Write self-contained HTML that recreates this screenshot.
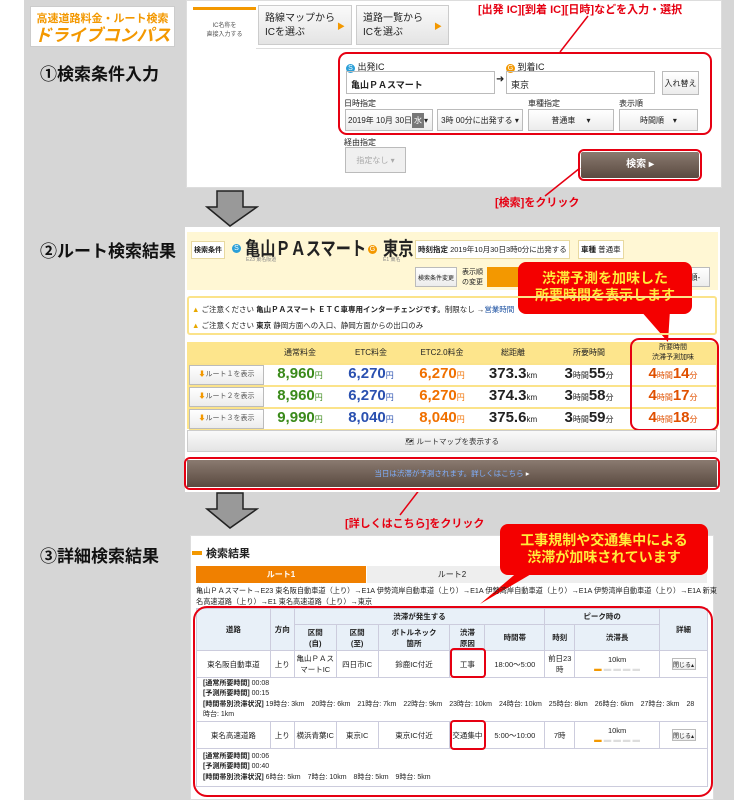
<!DOCTYPE html>
<html><head><meta charset="utf-8"><style>
*{margin:0;padding:0;box-sizing:border-box}
body{width:752px;height:800px;position:relative;background:#fff;font-family:"Liberation Sans","Noto Sans CJK JP",sans-serif;overflow:hidden;color:#222}
.a{position:absolute}
.t{font-size:9px;white-space:nowrap}
.gb{background:linear-gradient(#fafafa,#e4e4e4);border:1px solid #ccc}
.rb{border:2px solid #e60012;border-radius:9px}
.red{color:#e60012;font-weight:bold}
.h{font-size:17px;font-weight:bold;color:#111}
.sel{background:linear-gradient(#fff,#ececec);border:1px solid #bbb;font-size:8px;display:flex;align-items:center;justify-content:center}
table{border-collapse:collapse}
.rt td{border-bottom:2px solid #fbe38a;height:22px;font-weight:bold;text-align:center;font-size:15px;padding:0;line-height:18px}
.rt td.hd{font-size:8px;font-weight:normal;line-height:10px}
.dt td,.dt th{border:1px solid #ccd;font-size:7.5px;text-align:center;font-weight:normal}
.dt th{background:#e8f0f8;font-weight:bold}
.arrow{position:absolute;width:54px;height:37px}
.call{position:absolute;background:#f40000;border-radius:8px;color:#ffeb3b;font-weight:bold;text-align:center;font-size:14px;line-height:17px}
.n{font-size:8px;font-weight:normal}
.sq{display:inline-block;transform:scaleX(0.8);transform-origin:left top;white-space:nowrap}
</style></head><body>
<div class="a" style="left:24px;top:0;width:710px;height:800px;background:#d6d6d6"></div>
<!-- logo -->
<div class="a" style="left:30px;top:6px;width:145px;height:41px;background:#fff;border:1px solid #ccc;color:#f39800;font-weight:bold;text-align:center;white-space:nowrap">
<div style="font-size:11px;margin-top:3px">高速道路料金・ルート検索</div>
<div style="font-size:17px;font-style:italic;line-height:20px">ドライブコンパス</div></div>
<div class="a h" style="left:40px;top:60px">①検索条件入力</div>
<div class="a h" style="left:40px;top:237px">②ルート検索結果</div>
<div class="a h" style="left:40px;top:542px">③詳細検索結果</div>

<!-- panel1 -->
<div class="a" style="left:186px;top:0;width:536px;height:188px;background:#fff;border:1px solid #ddd"></div>
<div class="a" style="left:193px;top:7px;width:63px;height:42px;border-top:3px solid #f39800;font-size:6px;text-align:center;padding-top:10px;color:#555">IC名称を<br>直接入力する</div>
<div class="a" style="left:256px;top:48px;width:466px;height:1px;background:#ddd"></div>
<div class="a gb" style="left:258px;top:5px;width:94px;height:40px;font-size:10px;padding:6px 6px;line-height:14px">路線マップから<br>ICを選ぶ<span style="position:absolute;right:6px;top:14px;color:#f39800;font-size:8px">▶</span></div>
<div class="a gb" style="left:356px;top:5px;width:93px;height:40px;font-size:10px;padding:6px 6px;line-height:14px">道路一覧から<br>ICを選ぶ<span style="position:absolute;right:6px;top:14px;color:#f39800;font-size:8px">▶</span></div>
<div class="a red" style="left:478px;top:1px;font-size:11px">[出発 IC][到着 IC][日時]などを入力・選択</div>
<svg class="a" style="left:0;top:0" width="752" height="800"><g stroke="#e60012" stroke-width="1.5" fill="none"><line x1="588" y1="16" x2="560" y2="52"/><line x1="580" y1="168" x2="545" y2="196"/><line x1="420" y1="489" x2="400" y2="515"/></g></svg>
<div class="a t" style="left:346px;top:60px"><span style="display:inline-block;width:9px;height:9px;border-radius:50%;background:#2a9fd8;color:#fff;font-size:7px;text-align:center;line-height:9px">S</span> 出発IC</div>
<div class="a t" style="left:506px;top:60px"><span style="display:inline-block;width:9px;height:9px;border-radius:50%;background:#f39800;color:#fff;font-size:7px;text-align:center;line-height:9px">G</span> 到着IC</div>
<div class="a" style="left:346px;top:71px;width:149px;height:23px;border:1px solid #bbb;font-size:9px;font-weight:bold;padding:6px 4px">亀山ＰＡスマート</div>
<div class="a" style="left:496px;top:74px;font-size:10px">➜</div>
<div class="a" style="left:506px;top:71px;width:149px;height:23px;border:1px solid #bbb;font-size:9px;padding:6px 4px">東京</div>
<div class="a sel" style="left:662px;top:71px;width:37px;height:24px">入れ替え</div>
<div class="a t" style="left:344px;top:98px;font-size:8px">日時指定</div>
<div class="a t" style="left:528px;top:98px;font-size:8px">車種指定</div>
<div class="a t" style="left:619px;top:98px;font-size:8px">表示順</div>
<div class="a sel" style="left:345px;top:109px;width:88px;height:22px;justify-content:flex-start;padding-left:2px">2019年 10月 30日 <span style="background:#777;color:#fff;padding:2px">水</span>▾</div>
<div class="a sel" style="left:437px;top:109px;width:86px;height:22px">3時 00分に出発する ▾</div>
<div class="a sel" style="left:528px;top:109px;width:86px;height:22px">普通車 &nbsp;&nbsp;&nbsp;&nbsp;▾</div>
<div class="a sel" style="left:619px;top:109px;width:79px;height:22px">時間順 &nbsp;&nbsp;&nbsp;▾</div>
<div class="a rb" style="left:338px;top:52px;width:374px;height:83px"></div>
<div class="a t" style="left:344px;top:137px;font-size:8px">経由指定</div>
<div class="a sel" style="left:345px;top:147px;width:61px;height:26px;color:#aaa;background:#f0f0f0">指定なし ▾</div>
<div class="a" style="left:581px;top:152px;width:118px;height:26px;background:linear-gradient(#8a7a70,#5a4a40);color:#fff;font-size:10px;font-weight:bold;text-align:center;line-height:26px;border-radius:2px">検索 ▸</div>
<div class="a rb" style="left:578px;top:149px;width:124px;height:32px;border-radius:6px"></div>
<div class="a red" style="left:495px;top:194px;font-size:11px">[検索]をクリック</div>

<!-- arrows -->
<svg class="arrow" style="left:205px;top:190px" viewBox="0 0 54 37"><path d="M12 1H38V17H52L25 36L2 17H12Z" fill="#999" stroke="#222" stroke-width="1.5"/></svg>
<svg class="arrow" style="left:205px;top:492px" viewBox="0 0 54 37"><path d="M12 1H38V17H52L25 36L2 17H12Z" fill="#999" stroke="#222" stroke-width="1.5"/></svg>

<!-- panel2 -->
<div class="a" style="left:185px;top:227px;width:535px;height:265px;background:#fff"></div>
<div class="a" style="left:187px;top:232px;width:531px;height:58px;background:#fff7d4"></div>
<div class="a t" style="left:191px;top:241px;border:1px solid #e8d9a0;background:#fff;padding:3px 2px;font-size:7px;font-weight:bold">検索条件</div>
<div class="a" style="left:232px;top:244px;width:9px;height:9px;border-radius:50%;background:#2a9fd8;color:#fff;font-size:7px;text-align:center;line-height:9px">S</div>
<div class="a" style="left:245px;top:234px;font-size:19px;font-weight:bold"><span class="sq" style="transform:scaleX(0.8)">亀山ＰＡスマート</span></div>
<div class="a" style="left:368px;top:245px;width:9px;height:9px;border-radius:50%;background:#f39800;color:#fff;font-size:7px;text-align:center;line-height:9px">G</div>
<div class="a" style="left:383px;top:234px;font-size:19px;font-weight:bold"><span class="sq">東京</span></div>
<div class="a t" style="left:246px;top:256px;font-size:5px;color:#888">E23 東名阪道</div>
<div class="a t" style="left:383px;top:256px;font-size:5px;color:#888">E1 東名</div>
<div class="a t" style="left:415px;top:240px;border:1px solid #e8d9a0;background:#fff;padding:3px 2px;font-size:7.5px"><b>時刻指定</b> 2019年10月30日3時0分に出発する</div>
<div class="a t" style="left:578px;top:240px;border:1px solid #e8d9a0;background:#fff;padding:3px 2px;font-size:7.5px"><b>車種</b> 普通車</div>
<div class="a sel" style="left:415px;top:267px;width:42px;height:20px;font-size:6px">検索条件変更</div>
<div class="a t" style="left:462px;top:268px;font-size:7px;line-height:10px">表示順<br>の変更</div>
<div class="a" style="left:487px;top:267px;width:40px;height:20px;background:#f39800"></div>
<div class="a sel" style="left:680px;top:267px;width:30px;height:20px">順-</div>
<div class="call" style="left:518px;top:262px;width:174px;height:52px;padding-top:8px">渋滞予測を加味した<br>所要時間を表示します</div>
<svg class="a" style="left:620px;top:310px" width="60" height="34"><path d="M20 0L50 0L48 32Z" fill="#f40000"/></svg>
<div class="a" style="left:187px;top:296px;width:530px;height:39px;border:2px solid #fbe38a;border-radius:3px"></div>
<div class="a t" style="left:192px;top:304px;font-size:7.5px"><span style="color:#e8a800">▲</span> ご注意ください <b>亀山ＰＡスマート ＥＴＣ車専用インターチェンジです。</b>制限なし →<span style="color:#1a4fa0">営業時間</span></div>
<div class="a t" style="left:192px;top:320px;font-size:7.5px"><span style="color:#e8a800">▲</span> ご注意ください <b>東京</b> 静岡方面への入口、静岡方面からの出口のみ</div>
<div class="a" style="left:187px;top:342px;width:531px;height:87px;background:#fde58c"></div>
<table class="a rt" style="left:189px;top:342px;width:527px;table-layout:fixed">
<tr style="background:#fde58c"><td style="width:75px;height:22px" class="hd"></td><td style="width:72px" class="hd">通常料金</td><td style="width:70px" class="hd">ETC料金</td><td style="width:72px" class="hd">ETC2.0料金</td><td style="width:70px" class="hd">総距離</td><td style="width:82px" class="hd">所要時間</td><td class="hd" style="font-size:7px">所要時間<br>渋滞予測加味</td></tr>
<tr style="background:#fff"><td><div class="sel" style="font-size:7px;font-weight:normal;height:20px;color:#555"><span style="color:#f39800">⬇</span> ルート１を表示</div></td><td style="color:#3a8a1a">8,960<span class="n">円</span></td><td style="color:#2a50b0">6,270<span class="n">円</span></td><td style="color:#f07000">6,270<span class="n">円</span></td><td>373.3<span class="n">km</span></td><td>3<span class="n">時間</span>55<span class="n">分</span></td><td style="color:#e05000">4<span class="n">時間</span>14<span class="n">分</span></td></tr>
<tr style="background:#fff"><td><div class="sel" style="font-size:7px;font-weight:normal;height:20px;color:#555"><span style="color:#f39800">⬇</span> ルート２を表示</div></td><td style="color:#3a8a1a">8,960<span class="n">円</span></td><td style="color:#2a50b0">6,270<span class="n">円</span></td><td style="color:#f07000">6,270<span class="n">円</span></td><td>374.3<span class="n">km</span></td><td>3<span class="n">時間</span>58<span class="n">分</span></td><td style="color:#e05000">4<span class="n">時間</span>17<span class="n">分</span></td></tr>
<tr style="background:#fff"><td><div class="sel" style="font-size:7px;font-weight:normal;height:20px;color:#555"><span style="color:#f39800">⬇</span> ルート３を表示</div></td><td style="color:#3a8a1a">9,990<span class="n">円</span></td><td style="color:#2a50b0">8,040<span class="n">円</span></td><td style="color:#f07000">8,040<span class="n">円</span></td><td>375.6<span class="n">km</span></td><td>3<span class="n">時間</span>59<span class="n">分</span></td><td style="color:#e05000">4<span class="n">時間</span>18<span class="n">分</span></td></tr>
</table>
<div class="a rb" style="left:630px;top:338px;width:89px;height:93px"></div>
<div class="a gb" style="left:187px;top:430px;width:530px;height:22px;font-size:7.5px;text-align:center;line-height:21px;color:#333">🗺 ルートマップを表示する</div>
<div class="a" style="left:187px;top:460px;width:530px;height:27px;background:linear-gradient(#8a7a70,#5a4a40);font-size:7.5px;text-align:center;line-height:27px;color:#7fb0ff">当日は渋滞が予測されます。詳しくはこちら <span style="color:#fff">▸</span></div>
<div class="a rb" style="left:184px;top:457px;width:536px;height:33px;border-radius:6px"></div>
<div class="a red" style="left:345px;top:515px;font-size:11px">[詳しくはこちら]をクリック</div>

<!-- panel3 -->
<div class="a" style="left:190px;top:535px;width:524px;height:265px;background:#fff;border:1px solid #ddd"></div>
<div class="a" style="left:192px;top:551px;width:10px;height:4px;background:#f39800"></div>
<div class="a" style="left:206px;top:545px;font-size:11px;font-weight:bold">検索結果</div>
<div class="a" style="left:196px;top:566px;width:170px;height:17px;background:#f08000;color:#fff;font-size:8px;text-align:center;line-height:17px;font-weight:bold">ルート1</div>
<div class="a" style="left:367px;top:566px;width:340px;height:17px;background:#eee;font-size:8px;text-align:center;line-height:17px;padding-right:170px">ルート2</div>
<div class="call" style="left:500px;top:524px;width:208px;height:51px;padding-top:8px;font-size:14px">工事規制や交通集中による<br>渋滞が加味されています</div>
<svg class="a" style="left:480px;top:570px" width="60" height="36"><path d="M40 0L58 0L0 34Z" fill="#f40000"/></svg>
<div class="a t" style="left:196px;top:585px;font-size:7.2px;line-height:11px">亀山ＰＡスマート→E23 東名阪自動車道（上り）→E1A 伊勢湾岸自動車道（上り）→E1A 伊勢湾岸自動車道（上り）→E1A 伊勢湾岸自動車道（上り）→E1A 新東<br>名高速道路（上り）→E1 東名高速道路（上り）→東京</div>
<table class="a dt" style="left:196px;top:608px;width:512px">
<tr><th rowspan="2" style="width:74px">道路</th><th rowspan="2" style="width:24px">方向</th><th colspan="5" style="height:16px">渋滞が発生する</th><th colspan="2">ピーク時の</th><th rowspan="2" style="width:48px">詳細</th></tr>
<tr><th style="width:42px;height:26px">区間<br>(自)</th><th style="width:42px">区間<br>(至)</th><th style="width:72px">ボトルネック<br>箇所</th><th style="width:35px">渋滞<br>原因</th><th style="width:60px">時間帯</th><th style="width:30px">時刻</th><th style="width:85px">渋滞長</th></tr>
<tr><td style="height:27px">東名阪自動車道</td><td>上り</td><td>亀山ＰＡス<br>マートIC</td><td>四日市IC</td><td>鈴鹿IC付近</td><td>工事</td><td>18:00〜5:00</td><td>前日23<br>時</td><td>10km<br><span style="color:#f39800">▬</span> <span style="color:#ddd">▬ ▬ ▬ ▬</span></td><td><span class="sel" style="display:inline-flex;width:24px;height:12px;font-size:6px">閉じる▴</span></td></tr>
<tr><td colspan="10" style="text-align:left;height:44px;line-height:10.5px;padding-left:6px;font-size:7px"><b>[通常所要時間]</b> 00:08<br><b>[予測所要時間]</b> 00:15<br><b>[時間帯別渋滞状況]</b> 19時台: 3km　20時台: 6km　21時台: 7km　22時台: 9km　23時台: 10km　24時台: 10km　25時台: 8km　26時台: 6km　27時台: 3km　28<br>時台: 1km</td></tr>
<tr><td style="height:27px">東名高速道路</td><td>上り</td><td>横浜青葉IC</td><td>東京IC</td><td>東京IC付近</td><td>交通集中</td><td>5:00〜10:00</td><td>7時</td><td>10km<br><span style="color:#f39800">▬</span> <span style="color:#ddd">▬ ▬ ▬ ▬</span></td><td><span class="sel" style="display:inline-flex;width:24px;height:12px;font-size:6px">閉じる▴</span></td></tr>
<tr><td colspan="10" style="text-align:left;height:38px;line-height:10.5px;padding-left:6px;font-size:7px"><b>[通常所要時間]</b> 00:06<br><b>[予測所要時間]</b> 00:40<br><b>[時間帯別渋滞状況]</b> 6時台: 5km　7時台: 10km　8時台: 5km　9時台: 5km</td></tr>
</table>
<div class="a rb" style="left:193px;top:606px;width:520px;height:191px;border-radius:14px"></div>
<div class="a rb" style="left:450px;top:648px;width:36px;height:30px;border-radius:4px"></div>
<div class="a rb" style="left:450px;top:720px;width:36px;height:30px;border-radius:4px"></div>
</body></html>
